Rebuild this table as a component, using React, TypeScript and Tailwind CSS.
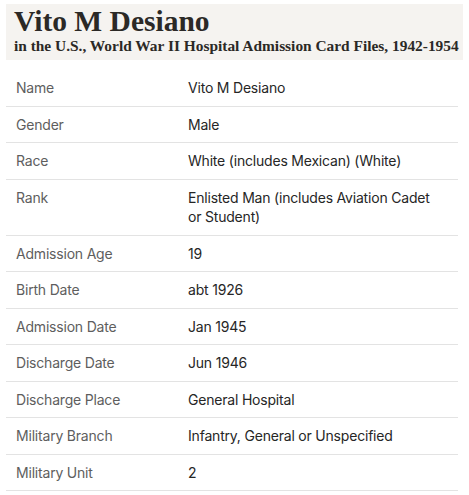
import React from "react";

const rows: [string, string][] = [
  ["Name", "Vito M Desiano"],
  ["Gender", "Male"],
  ["Race", "White (includes Mexican) (White)"],
  ["Rank", "Enlisted Man (includes Aviation Cadet or Student)"],
  ["Admission Age", "19"],
  ["Birth Date", "abt 1926"],
  ["Admission Date", "Jan 1945"],
  ["Discharge Date", "Jun 1946"],
  ["Discharge Place", "General Hospital"],
  ["Military Branch", "Infantry, General or Unspecified"],
  ["Military Unit", "2"],
];

export default function App() {
  return (
    <div className="w-[469px] h-[495px] bg-white pt-[4px] pl-[6px] pr-[6px] overflow-hidden">
      <div className="bg-[#f5f3f0] pl-[8px] pt-[3px] h-[56px]" style={{ fontFamily: '"Liberation Serif", serif' }}>
        <div className="text-[29.5px] font-bold leading-[29px] text-[#2b2926]">Vito M Desiano</div>
        <div className="text-[15.4px] font-bold leading-[20px] text-[#2b2926] whitespace-nowrap">
          in the U.S., World War II Hospital Admission Card Files, 1942-1954
        </div>
      </div>
      <div className="mt-[10px] w-[452px]" style={{ fontFamily: 'Inter, "Liberation Sans", sans-serif' }}>
        {rows.map(([k, v]) => (
          <div key={k} className="flex border-b border-[#e3e3e3] py-[8px] text-[14px] leading-[19.5px] tracking-[-0.2px]">
            <div className="w-[182px] shrink-0 pl-[10px] text-[#5e5e5e]">{k}</div>
            <div className="w-[255px] text-[#262626]">{v}</div>
          </div>
        ))}
      </div>
    </div>
  );
}
